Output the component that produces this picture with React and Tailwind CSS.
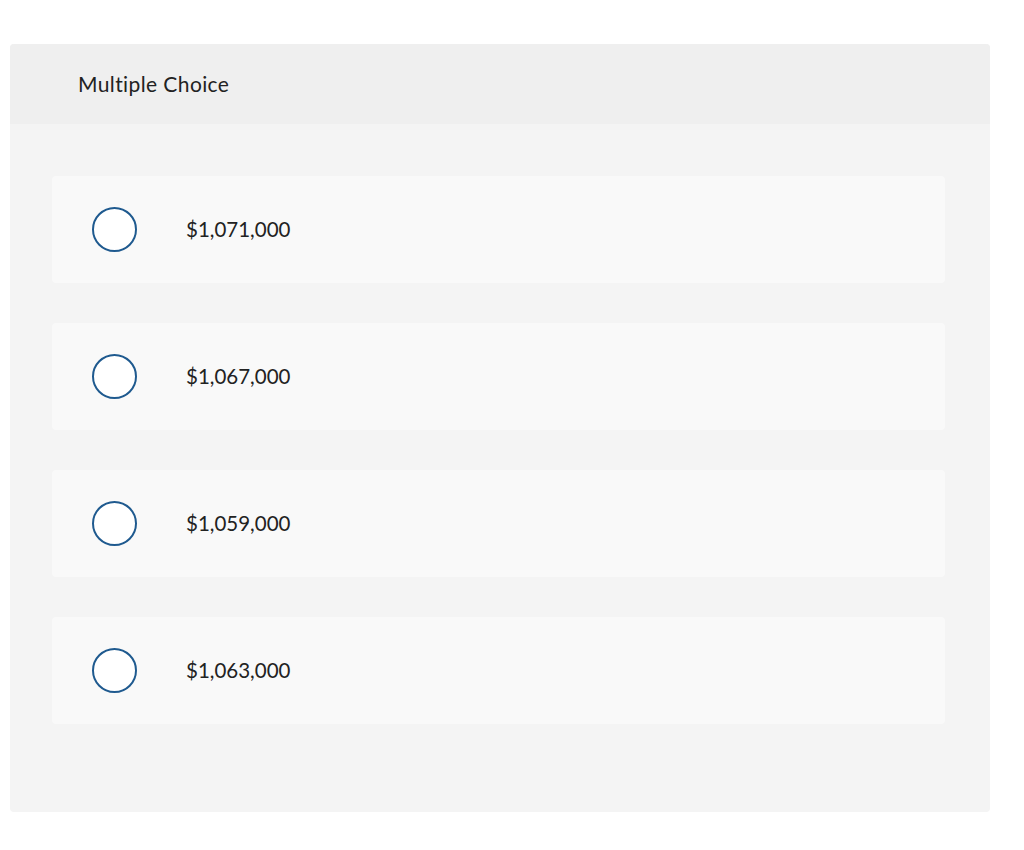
const options = ["$1,071,000", "$1,067,000", "$1,059,000", "$1,063,000"];

export default function App() {
  return (
    <div className="min-h-screen bg-white pt-[44px] pl-[10px]" style={{ fontFamily: "Lato, 'Open Sans', sans-serif" }}>
      <div className="w-[980px] h-[768px] rounded-[4px] bg-[#f4f4f4] overflow-hidden">
        <div className="h-[80px] bg-[#efefef] flex items-center pl-[68px]">
          <h2 className="text-[21px] text-[#222] tracking-[0.4px]">Multiple Choice</h2>
        </div>
        <div className="pt-[52px] pl-[42px] pr-[45px] flex flex-col gap-[40px]">
          {options.map((opt) => (
            <label
              key={opt}
              className="h-[107px] rounded-[4px] bg-[#f9f9f9] flex items-center pl-[40px] cursor-pointer"
            >
              <span className="w-[45px] h-[45px] rounded-full border-2 border-[#1f5a8f] bg-white shrink-0" />
              <span className="ml-[49px] text-[20.5px] text-[#222]">{opt}</span>
            </label>
          ))}
        </div>
      </div>
    </div>
  );
}
